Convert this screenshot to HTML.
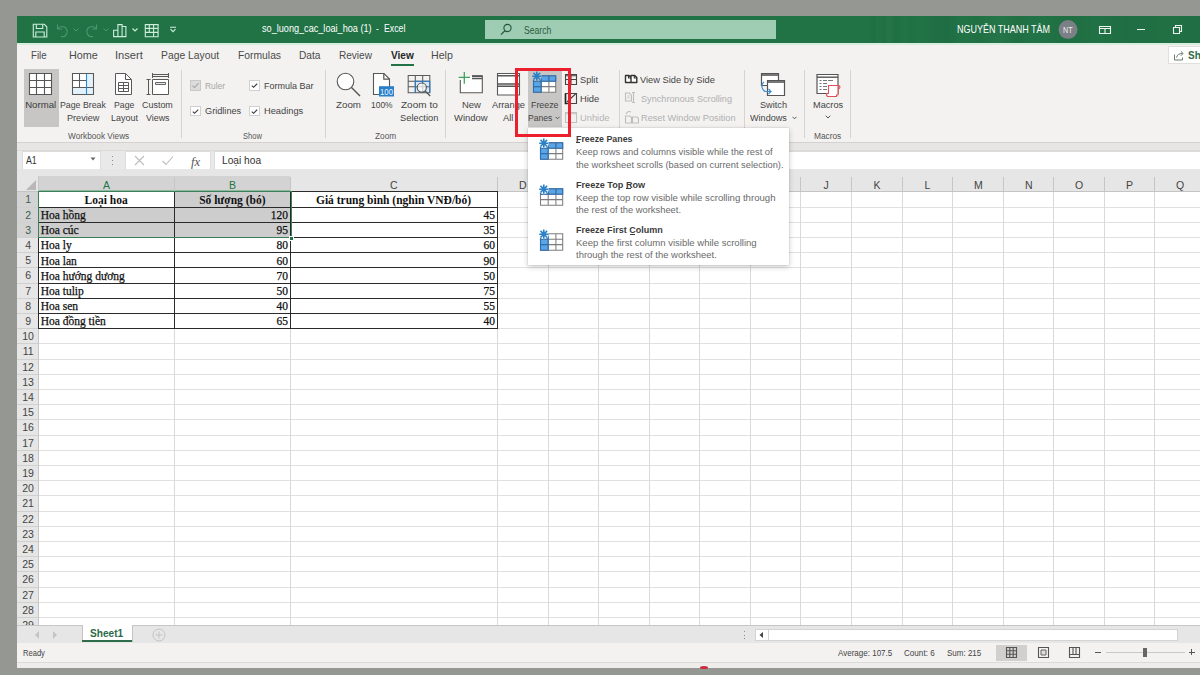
<!DOCTYPE html>
<html><head><meta charset="utf-8"><style>
html,body{margin:0;padding:0;width:1200px;height:675px;overflow:hidden;background:#959793;position:relative;font-family:'Liberation Sans', sans-serif}
</style></head><body>
<div style="position:absolute;left:17px;top:16px;width:1183px;height:651px;background:#f3f2f1;"></div><div style="position:absolute;left:17px;top:16px;width:1183px;height:26.5px;background:#217346;"></div><div style="position:absolute;left:17px;top:42.5px;width:1183px;height:2px;background:#d6eedd;"></div><div style="position:absolute;left:868px;top:16px;width:332px;height:26.5px;background:linear-gradient(90deg,rgba(0,0,0,0.000) 0px,rgba(0,0,0,0.039) 6px,rgba(0,0,0,0.000) 10px,rgba(0,0,0,0.028) 16px,rgba(255,255,255,0.017) 22px,rgba(0,0,0,0.044) 28px,rgba(0,0,0,0.000) 36px,rgba(0,0,0,0.033) 44px,rgba(0,0,0,0.000) 52px,rgba(0,0,0,0.039) 70px,rgba(0,0,0,0.055) 80px,rgba(0,0,0,0.000) 92px,rgba(0,0,0,0.028) 110px,rgba(255,255,255,0.017) 130px,rgba(0,0,0,0.033) 150px,rgba(0,0,0,0.000) 170px,rgba(0,0,0,0.044) 200px,rgba(0,0,0,0.017) 230px,rgba(0,0,0,0.050) 260px,rgba(0,0,0,0.022) 300px,rgba(0,0,0,0.044) 332px);"></div><svg style="position:absolute;left:32px;top:23px;" width="16" height="15" viewBox="0 0 16 15"><path d="M1.3 1.3h11l2.5 2.5v10.2H1.3z" fill="none" stroke="#cdeedb" stroke-width="1.1"/><path d="M4.3 1.3v4.2h6.4V1.3M3.8 14v-5h8.4v5" fill="none" stroke="#cdeedb" stroke-width="1.1"/></svg><svg style="position:absolute;left:55px;top:23px;" width="14" height="15" viewBox="0 0 14 15"><path d="M2.5 1.5v4.5h4.5M2.8 6A5 5 0 1 1 6 13.5" fill="none" stroke="#4d9470" stroke-width="1.1"/></svg><svg style="position:absolute;left:73px;top:28px;" width="6" height="4" viewBox="0 0 6 4"><path d="M.5 .5l2.5 2.5 2.5-2.5" fill="none" stroke="#4d9470" stroke-width="1"/></svg><svg style="position:absolute;left:85px;top:23px;" width="14" height="15" viewBox="0 0 14 15"><path d="M11.5 1.5v4.5H7M11.2 6A5 5 0 1 0 8 13.5" fill="none" stroke="#4d9470" stroke-width="1.1"/></svg><svg style="position:absolute;left:103px;top:28px;" width="6" height="4" viewBox="0 0 6 4"><path d="M.5 .5l2.5 2.5 2.5-2.5" fill="none" stroke="#4d9470" stroke-width="1"/></svg><svg style="position:absolute;left:112px;top:23px;" width="15" height="15" viewBox="0 0 15 15"><path d="M1.6 13.6V7.3h4.3v6.3zM5.9 13.6V1.6h4.2v12zM10.1 13.6V3.5h3.8v10.1z" fill="none" stroke="#cdeedb" stroke-width="1.1"/></svg><svg style="position:absolute;left:131.5px;top:27.5px;" width="6" height="4" viewBox="0 0 6 4"><path d="M.5 .5l2.5 2.5 2.5-2.5" fill="none" stroke="#cdeedb" stroke-width="1.1"/></svg><svg style="position:absolute;left:144px;top:23px;" width="15" height="15" viewBox="0 0 15 15"><path d="M1.3 1.6h12.8v12.2H1.3zM1.3 5.4h12.8M1.3 9.4h12.8M5.3 1.6v7.8M9.6 1.6v12.2" fill="none" stroke="#cdeedb" stroke-width="1.1"/></svg><svg style="position:absolute;left:169px;top:26px;" width="8" height="7" viewBox="0 0 8 7"><path d="M1 1.2h6M1.5 3.2l2.5 2.5 2.5-2.5" fill="none" stroke="#cdeedb" stroke-width="1.1"/></svg><span id="t0" style="position:absolute;left:261.70px;top:22.08px;font-family:'Liberation Sans', sans-serif;font-size:11px;font-weight:400;color:#ffffff;line-height:normal;white-space:pre;transform:scaleX(0.8293);transform-origin:0 0;">so_luong_cac_loai_hoa (1)</span><span id="t1" style="position:absolute;left:376.00px;top:22.08px;font-family:'Liberation Sans', sans-serif;font-size:11px;font-weight:400;color:#ffffff;line-height:normal;white-space:pre;transform:scaleX(0.7500);transform-origin:0 0;">-</span><span id="t2" style="position:absolute;left:384.20px;top:22.08px;font-family:'Liberation Sans', sans-serif;font-size:11px;font-weight:400;color:#ffffff;line-height:normal;white-space:pre;transform:scaleX(0.7938);transform-origin:0 0;">Excel</span><div style="position:absolute;left:485px;top:20px;width:291px;height:19px;background:#9fcdb3;"></div><svg style="position:absolute;left:499px;top:23px;" width="14" height="13" viewBox="0 0 14 13"><circle cx="8.5" cy="5" r="3.6" fill="none" stroke="#1f5236" stroke-width="1.1"/><path d="M6 7.6L2 11.6" stroke="#1f5236" stroke-width="1.2"/></svg><span id="t3" style="position:absolute;left:524.00px;top:23.54px;font-family:'Liberation Sans', sans-serif;font-size:10.5px;font-weight:400;color:#2b5b3f;line-height:normal;white-space:pre;transform:scaleX(0.8226);transform-origin:0 0;">Search</span><span id="t4" style="position:absolute;left:957.30px;top:23.34px;font-family:'Liberation Sans', sans-serif;font-size:10.5px;font-weight:400;color:#ffffff;line-height:normal;white-space:pre;transform:scaleX(0.8556);transform-origin:0 0;">NGUYỄN THANH TÂM</span><svg style="position:absolute;left:1058px;top:20px;" width="20" height="20" viewBox="0 0 20 20"><circle cx="10" cy="9.6" r="9.5" fill="#7b7f86"/></svg><span id="t5" style="position:absolute;left:1063.00px;top:24.52px;font-family:'Liberation Sans', sans-serif;font-size:9px;font-weight:400;color:#eeeeee;line-height:normal;white-space:pre;transform:scaleX(0.8000);transform-origin:0 0;">NT</span><svg style="position:absolute;left:1098px;top:25px;" width="14" height="10" viewBox="0 0 14 10"><path d="M1.5 1.5h11v7h-11zM1.5 3.5h11M7 3.5v5" fill="none" stroke="#eef5f0" stroke-width="1.1"/></svg><div style="position:absolute;left:1136.5px;top:28.8px;width:8px;height:1.1px;background:#eef5f0;"></div><svg style="position:absolute;left:1172px;top:24px;" width="11" height="11" viewBox="0 0 11 11"><path d="M1.5 3.5h6v6h-6zM3.5 3.5v-2h6v6h-2" fill="none" stroke="#eef5f0" stroke-width="1.1"/></svg><span id="t6" style="position:absolute;left:30.75px;top:48.88px;font-family:'Liberation Sans', sans-serif;font-size:11px;font-weight:400;color:#4a4a4a;line-height:normal;white-space:pre;transform:scaleX(0.8803);transform-origin:0 0;">File</span><span id="t7" style="position:absolute;left:69.00px;top:48.88px;font-family:'Liberation Sans', sans-serif;font-size:11px;font-weight:400;color:#4a4a4a;line-height:normal;white-space:pre;transform:scaleX(0.9838);transform-origin:0 0;">Home</span><span id="t8" style="position:absolute;left:114.99px;top:48.88px;font-family:'Liberation Sans', sans-serif;font-size:11px;font-weight:400;color:#4a4a4a;line-height:normal;white-space:pre;transform:scaleX(1.0112);transform-origin:0 0;">Insert</span><span id="t9" style="position:absolute;left:161.00px;top:48.88px;font-family:'Liberation Sans', sans-serif;font-size:11px;font-weight:400;color:#4a4a4a;line-height:normal;white-space:pre;transform:scaleX(0.9398);transform-origin:0 0;">Page Layout</span><span id="t10" style="position:absolute;left:237.50px;top:48.88px;font-family:'Liberation Sans', sans-serif;font-size:11px;font-weight:400;color:#4a4a4a;line-height:normal;white-space:pre;transform:scaleX(0.9387);transform-origin:0 0;">Formulas</span><span id="t11" style="position:absolute;left:298.75px;top:48.88px;font-family:'Liberation Sans', sans-serif;font-size:11px;font-weight:400;color:#4a4a4a;line-height:normal;white-space:pre;transform:scaleX(0.9226);transform-origin:0 0;">Data</span><span id="t12" style="position:absolute;left:339.00px;top:48.88px;font-family:'Liberation Sans', sans-serif;font-size:11px;font-weight:400;color:#4a4a4a;line-height:normal;white-space:pre;transform:scaleX(0.9135);transform-origin:0 0;">Review</span><span id="t13" style="position:absolute;left:390.50px;top:48.88px;font-family:'Liberation Sans', sans-serif;font-size:11px;font-weight:700;color:#262626;line-height:normal;white-space:pre;transform:scaleX(0.9185);transform-origin:0 0;">View</span><span id="t14" style="position:absolute;left:430.75px;top:48.88px;font-family:'Liberation Sans', sans-serif;font-size:11px;font-weight:400;color:#4a4a4a;line-height:normal;white-space:pre;transform:scaleX(0.9664);transform-origin:0 0;">Help</span><div style="position:absolute;left:391px;top:64px;width:23px;height:2.2px;background:#217346;"></div><div style="position:absolute;left:1168.4px;top:45.8px;width:40px;height:18.4px;box-sizing:border-box;border:1px solid #e1dfdd;background:#ffffff;"></div><svg style="position:absolute;left:1173px;top:50px;" width="12" height="11" viewBox="0 0 12 11"><path d="M1.5 4.5v5.5h8V7.5M3.5 7.5c.5-3 3-4 6-4M7.8 1.3l2.3 2.2-2.3 2.3" fill="none" stroke="#6b7a70" stroke-width="1"/></svg><span id="t15" style="position:absolute;left:1187.50px;top:48.78px;font-family:'Liberation Sans', sans-serif;font-size:11px;font-weight:700;color:#2e6b47;line-height:normal;white-space:pre;transform:scaleX(0.9068);transform-origin:0 0;">Sh</span><div style="position:absolute;left:181px;top:70px;width:1px;height:68px;background:#d6d4d2;"></div><div style="position:absolute;left:325px;top:70px;width:1px;height:68px;background:#d6d4d2;"></div><div style="position:absolute;left:445px;top:70px;width:1px;height:68px;background:#d6d4d2;"></div><div style="position:absolute;left:619px;top:70px;width:1px;height:68px;background:#d6d4d2;"></div><div style="position:absolute;left:744px;top:70px;width:1px;height:68px;background:#d6d4d2;"></div><div style="position:absolute;left:804px;top:70px;width:1px;height:68px;background:#d6d4d2;"></div><div style="position:absolute;left:850px;top:70px;width:1px;height:68px;background:#d6d4d2;"></div><div style="position:absolute;left:24px;top:69px;width:34.5px;height:58px;background:#c8c6c4;"></div><svg style="position:absolute;left:28px;top:72px;" width="25" height="25" viewBox="0 0 25 25"><path d="M1.5 1.5h22v21h-22z" fill="#fff" stroke="#555" stroke-width="1.1"/><path d="M8.5 1.5v21M16.5 1.5v21M1.5 8.5h22M1.5 15.5h22" stroke="#555" stroke-width="1.1"/></svg><span id="t16" style="position:absolute;left:25.20px;top:99.27px;font-family:'Liberation Sans', sans-serif;font-size:9.6px;font-weight:400;color:#3a3a3a;line-height:normal;white-space:pre;">Normal</span><svg style="position:absolute;left:71px;top:72px;" width="25" height="25" viewBox="0 0 25 25"><path d="M1.5 1.5h21v21h-21z" fill="#fff"/><path d="M15.5 1.5h7v21h-21v-7h14z" fill="#e3f1fb"/><path d="M1.5 1.5h21v21h-21z" fill="none" stroke="#585858" stroke-width="1.05"/><path d="M8.5 1.5v14M1.5 8.5h14M1.5 15.5h21" stroke="#585858" stroke-width="1.05"/><path d="M15.5 1.5v21" stroke="#2a8ad4" stroke-width="1.1"/></svg><span id="t17" style="position:absolute;left:60.00px;top:99.27px;font-family:'Liberation Sans', sans-serif;font-size:9.6px;font-weight:400;color:#444;line-height:normal;white-space:pre;transform:scaleX(0.9139);transform-origin:0 0;">Page Break</span><span id="t18" style="position:absolute;left:66.60px;top:111.97px;font-family:'Liberation Sans', sans-serif;font-size:9.6px;font-weight:400;color:#444;line-height:normal;white-space:pre;transform:scaleX(0.9476);transform-origin:0 0;">Preview</span><svg style="position:absolute;left:114px;top:72px;" width="20" height="25" viewBox="0 0 20 25"><path d="M1.5 1.5h10l6 6v15H1.5z" fill="#fff" stroke="#585858" stroke-width="1"/><path d="M11.5 1.5v6h6" fill="none" stroke="#585858" stroke-width="1"/><path d="M4.5 10.5h10v9h-10zM9.5 10.5v9M4.5 13.5h10M4.5 16.5h10" fill="none" stroke="#585858" stroke-width="1"/></svg><span id="t19" style="position:absolute;left:114.00px;top:99.27px;font-family:'Liberation Sans', sans-serif;font-size:9.6px;font-weight:400;color:#444;line-height:normal;white-space:pre;transform:scaleX(0.9062);transform-origin:0 0;">Page</span><span id="t20" style="position:absolute;left:110.50px;top:111.97px;font-family:'Liberation Sans', sans-serif;font-size:9.6px;font-weight:400;color:#444;line-height:normal;white-space:pre;transform:scaleX(0.9334);transform-origin:0 0;">Layout</span><svg style="position:absolute;left:145px;top:72px;" width="26" height="25" viewBox="0 0 26 25"><path d="M3.5 7.5v15M1.5 7.5h4M1.5 22.5h4" fill="none" stroke="#585858" stroke-width="1"/><path d="M7.5 2.5h16M7.5 4.5h16M7.5 1v5M23.5 1v5" fill="none" stroke="#585858" stroke-width="1"/><path d="M7.5 7.5h16v15h-16z" fill="#fff" stroke="#585858" stroke-width="1"/><path d="M10.5 10.5h10v2h-10z" fill="#e6e6e6" stroke="#666" stroke-width="1"/></svg><span id="t21" style="position:absolute;left:142.00px;top:99.27px;font-family:'Liberation Sans', sans-serif;font-size:9.6px;font-weight:400;color:#444;line-height:normal;white-space:pre;transform:scaleX(0.9316);transform-origin:0 0;">Custom</span><span id="t22" style="position:absolute;left:146.00px;top:111.97px;font-family:'Liberation Sans', sans-serif;font-size:9.6px;font-weight:400;color:#444;line-height:normal;white-space:pre;transform:scaleX(0.9250);transform-origin:0 0;">Views</span><span id="t23" style="position:absolute;left:68.00px;top:131.18px;font-family:'Liberation Sans', sans-serif;font-size:8.5px;font-weight:400;color:#555;line-height:normal;white-space:pre;transform:scaleX(0.9723);transform-origin:0 0;">Workbook Views</span><div style="position:absolute;left:190px;top:80px;width:11px;height:11px;box-sizing:border-box;border:1px solid #c8c8c8;background:#dcdcdc;"></div><svg style="position:absolute;left:190px;top:80px;" width="11" height="11" viewBox="0 0 11 11"><path d="M2.5 5.7l2 2 4-4.5" fill="none" stroke="#a8a8a8" stroke-width="1.1"/></svg><span id="t24" style="position:absolute;left:204.80px;top:79.97px;font-family:'Liberation Sans', sans-serif;font-size:9.6px;font-weight:400;color:#a6a6a6;line-height:normal;white-space:pre;transform:scaleX(0.8765);transform-origin:0 0;">Ruler</span><div style="position:absolute;left:249px;top:80px;width:10.5px;height:10.5px;box-sizing:border-box;border:1px solid #d0d0d0;background:#ffffff;"></div><svg style="position:absolute;left:249px;top:80px;" width="11" height="11" viewBox="0 0 11 11"><path d="M2.8 5.6l1.8 1.7 3.6-3.6" fill="none" stroke="#3a3a3a" stroke-width="1.15"/></svg><div style="position:absolute;left:190px;top:105.5px;width:10.5px;height:10.5px;box-sizing:border-box;border:1px solid #d0d0d0;background:#ffffff;"></div><svg style="position:absolute;left:190px;top:105.5px;" width="11" height="11" viewBox="0 0 11 11"><path d="M2.8 5.6l1.8 1.7 3.6-3.6" fill="none" stroke="#3a3a3a" stroke-width="1.15"/></svg><div style="position:absolute;left:249px;top:105.5px;width:10.5px;height:10.5px;box-sizing:border-box;border:1px solid #d0d0d0;background:#ffffff;"></div><svg style="position:absolute;left:249px;top:105.5px;" width="11" height="11" viewBox="0 0 11 11"><path d="M2.8 5.6l1.8 1.7 3.6-3.6" fill="none" stroke="#3a3a3a" stroke-width="1.15"/></svg><span id="t25" style="position:absolute;left:263.60px;top:79.97px;font-family:'Liberation Sans', sans-serif;font-size:9.6px;font-weight:400;color:#444;line-height:normal;white-space:pre;transform:scaleX(0.9368);transform-origin:0 0;">Formula Bar</span><span id="t26" style="position:absolute;left:204.80px;top:105.47px;font-family:'Liberation Sans', sans-serif;font-size:9.6px;font-weight:400;color:#444;line-height:normal;white-space:pre;transform:scaleX(0.9564);transform-origin:0 0;">Gridlines</span><span id="t27" style="position:absolute;left:263.60px;top:105.47px;font-family:'Liberation Sans', sans-serif;font-size:9.6px;font-weight:400;color:#444;line-height:normal;white-space:pre;transform:scaleX(0.9672);transform-origin:0 0;">Headings</span><span id="t28" style="position:absolute;left:243.00px;top:130.98px;font-family:'Liberation Sans', sans-serif;font-size:8.5px;font-weight:400;color:#555;line-height:normal;white-space:pre;transform:scaleX(0.8859);transform-origin:0 0;">Show</span><svg style="position:absolute;left:335px;top:72px;" width="27" height="25" viewBox="0 0 27 25"><circle cx="10.5" cy="9.5" r="8.3" fill="#fff" stroke="#585858" stroke-width="1.1"/><path d="M16.5 15.5l8.5 8.5" stroke="#555" stroke-width="1.4"/></svg><span id="t29" style="position:absolute;left:336.00px;top:99.27px;font-family:'Liberation Sans', sans-serif;font-size:9.6px;font-weight:400;color:#444;line-height:normal;white-space:pre;transform:scaleX(1.0191);transform-origin:0 0;">Zoom</span><svg style="position:absolute;left:372px;top:72px;" width="24" height="26" viewBox="0 0 24 26"><path d="M1.5 1.5h10.5l5.5 5.5v15.5H1.5z" fill="#fff" stroke="#585858" stroke-width="1.1"/><path d="M11.8 1.5V7.2h5.7" fill="none" stroke="#555" stroke-width="1.2"/><rect x="7" y="14.2" width="15" height="10.3" fill="#2a7fc9"/><text x="14.5" y="22.6" font-family="Liberation Sans, sans-serif" font-size="8.8" fill="#e8f4ff" text-anchor="middle" textLength="13" lengthAdjust="spacingAndGlyphs">100</text></svg><span id="t30" style="position:absolute;left:371.00px;top:99.27px;font-family:'Liberation Sans', sans-serif;font-size:9.6px;font-weight:400;color:#444;line-height:normal;white-space:pre;transform:scaleX(0.8798);transform-origin:0 0;">100%</span><svg style="position:absolute;left:406px;top:73px;" width="27" height="26" viewBox="0 0 27 26"><path d="M9.3 8.3h14.5v11.4H9.3z" fill="#d5e9f8"/><path d="M2.2 2.4h21.6v17.3H2.2zM2.2 8.3h21.6M2.2 13.7h21.6M9.3 2.4v17.3M16.7 2.4v17.3" fill="none" stroke="#5a5a5a" stroke-width="1.05"/><path d="M9.3 19.7V8.3h14.5v11.4" fill="none" stroke="#2e7cc4" stroke-width="1.1"/><circle cx="15.8" cy="14.6" r="4.6" fill="#fff" fill-opacity="0.7" stroke="#555" stroke-width="1.15"/><path d="M19.2 18l5 5" stroke="#555" stroke-width="1.3"/></svg><span id="t31" style="position:absolute;left:400.60px;top:99.27px;font-family:'Liberation Sans', sans-serif;font-size:9.6px;font-weight:400;color:#444;line-height:normal;white-space:pre;transform:scaleX(1.0444);transform-origin:0 0;">Zoom to</span><span id="t32" style="position:absolute;left:399.60px;top:111.97px;font-family:'Liberation Sans', sans-serif;font-size:9.6px;font-weight:400;color:#444;line-height:normal;white-space:pre;transform:scaleX(0.9711);transform-origin:0 0;">Selection</span><span id="t33" style="position:absolute;left:374.80px;top:130.78px;font-family:'Liberation Sans', sans-serif;font-size:8.5px;font-weight:400;color:#555;line-height:normal;white-space:pre;transform:scaleX(0.9794);transform-origin:0 0;">Zoom</span><svg style="position:absolute;left:457px;top:71px;" width="28" height="24" viewBox="0 0 28 24"><path d="M3.3 9v12.7h22v-17H15" fill="#fff" stroke="#585858" stroke-width="1.1"/><path d="M15 5.3h10.3M15 7.5h10.3" stroke="#555" stroke-width="1.6"/><path d="M1.7 6.3h11.3M7.3 1v11.7" stroke="#3ea35f" stroke-width="1.3"/></svg><span id="t34" style="position:absolute;left:462.00px;top:99.37px;font-family:'Liberation Sans', sans-serif;font-size:9.6px;font-weight:400;color:#444;line-height:normal;white-space:pre;transform:scaleX(0.9863);transform-origin:0 0;">New</span><span id="t35" style="position:absolute;left:454.00px;top:111.87px;font-family:'Liberation Sans', sans-serif;font-size:9.6px;font-weight:400;color:#444;line-height:normal;white-space:pre;transform:scaleX(0.9856);transform-origin:0 0;">Window</span><svg style="position:absolute;left:496px;top:72px;" width="25" height="25" viewBox="0 0 25 25"><path d="M1.5 1.5h22v21.5h-22z" fill="#fff" stroke="#585858" stroke-width="1.1"/><path d="M1.5 3.7h22M1.5 12h22M1.5 14.2h22" stroke="#555" stroke-width="1.4"/></svg><span id="t36" style="position:absolute;left:491.80px;top:99.37px;font-family:'Liberation Sans', sans-serif;font-size:9.6px;font-weight:400;color:#444;line-height:normal;white-space:pre;transform:scaleX(0.9676);transform-origin:0 0;">Arrange</span><span id="t37" style="position:absolute;left:502.70px;top:111.87px;font-family:'Liberation Sans', sans-serif;font-size:9.6px;font-weight:400;color:#444;line-height:normal;white-space:pre;transform:scaleX(0.9781);transform-origin:0 0;">All</span><div style="position:absolute;left:527.7px;top:71px;width:34.6px;height:56px;background:#c8c6c4;"></div><svg style="position:absolute;left:531.7px;top:70.5px;" width="25" height="23" viewBox="0 0 25 23"><rect x="1.5" y="4.8" width="7.699999999999999" height="5.500000000000001" fill="#58a6ea"/><rect x="9.2" y="4.8" width="7.699999999999999" height="5.500000000000001" fill="#58a6ea"/><rect x="16.9" y="4.8" width="6.800000000000001" height="5.500000000000001" fill="#58a6ea"/><rect x="1.5" y="10.3" width="7.699999999999999" height="5.299999999999999" fill="#58a6ea"/><rect x="9.2" y="10.3" width="7.699999999999999" height="5.299999999999999" fill="#fff"/><rect x="16.9" y="10.3" width="6.800000000000001" height="5.299999999999999" fill="#fff"/><rect x="1.5" y="15.6" width="7.699999999999999" height="5.700000000000001" fill="#58a6ea"/><rect x="9.2" y="15.6" width="7.699999999999999" height="5.700000000000001" fill="#fff"/><rect x="16.9" y="15.6" width="6.800000000000001" height="5.700000000000001" fill="#fff"/><path d="M1.5 4.8h22.2v16.5H1.5zM1.5 10.3h22.2M1.5 15.6h22.2M9.2 4.8v16.5M16.9 4.8v16.5" fill="none" stroke="#7d7d7d" stroke-width="1.05"/><path d="M1.5 21.3V4.8h22.2v5.5H9.2v11H1.5zM1.5 15.6h7.7M9.2 4.8v5.5M16.9 4.8v5.5M1.5 10.3h7.7" fill="none" stroke="#2d6fb3" stroke-width="1.1"/><circle cx="4.8" cy="5.2" r="5" fill="#c8c6c4" opacity="0.9"/><path d="M4.8 .6v9.2M.2 5.2h9.2M1.5 1.9l6.6 6.6M8.1 1.9l-6.6 6.6" stroke="#2b80c6" stroke-width="1.6"/><circle cx="4.8" cy="5.2" r="1.5" fill="#2b80c6"/></svg><span id="t38" style="position:absolute;left:530.50px;top:99.37px;font-family:'Liberation Sans', sans-serif;font-size:9.6px;font-weight:400;color:#444;line-height:normal;white-space:pre;transform:scaleX(0.9213);transform-origin:0 0;">Freeze</span><span id="t39" style="position:absolute;left:528.00px;top:111.87px;font-family:'Liberation Sans', sans-serif;font-size:9.6px;font-weight:400;color:#444;line-height:normal;white-space:pre;transform:scaleX(0.8940);transform-origin:0 0;">Panes</span><svg style="position:absolute;left:555px;top:115.5px;" width="5" height="4" viewBox="0 0 5 4"><path d="M.5 .8l2 2 2-2" fill="none" stroke="#555" stroke-width="1"/></svg><svg style="position:absolute;left:564px;top:73px;" width="14" height="13" viewBox="0 0 14 13"><path d="M1.5 1.5h11v10h-11zM1.5 6.5h11M7 1.5v10M1.5 2.8h11" fill="none" stroke="#444" stroke-width="1.1"/></svg><span id="t40" style="position:absolute;left:580.40px;top:73.77px;font-family:'Liberation Sans', sans-serif;font-size:9.6px;font-weight:400;color:#444;line-height:normal;white-space:pre;transform:scaleX(0.9633);transform-origin:0 0;">Split</span><svg style="position:absolute;left:564px;top:92px;" width="14" height="13" viewBox="0 0 14 13"><path d="M1.5 1.5h11v10h-11z" fill="none" stroke="#444" stroke-width="1.1"/><path d="M3 10l9-8.5" stroke="#444" stroke-width="1.1"/><path d="M1.5 1.5v10h2" stroke="#222" stroke-width="1.6" fill="none"/></svg><span id="t41" style="position:absolute;left:580.40px;top:92.87px;font-family:'Liberation Sans', sans-serif;font-size:9.6px;font-weight:400;color:#444;line-height:normal;white-space:pre;transform:scaleX(0.9796);transform-origin:0 0;">Hide</span><svg style="position:absolute;left:564px;top:111px;" width="14" height="13" viewBox="0 0 14 13"><path d="M1.5 1.5h11v10h-11zM1.5 2.8h11" fill="none" stroke="#c0c0c0" stroke-width="1.1"/></svg><span id="t42" style="position:absolute;left:580.40px;top:111.77px;font-family:'Liberation Sans', sans-serif;font-size:9.6px;font-weight:400;color:#b4b4b4;line-height:normal;white-space:pre;transform:scaleX(0.9712);transform-origin:0 0;">Unhide</span><svg style="position:absolute;left:624px;top:74px;" width="15" height="10" viewBox="0 0 15 10"><path d="M1.5 1.5h3.5l2 2v5H1.5zM7 3.5v5h5.8v-5l-2-2H7z" fill="#fff" stroke="#333" stroke-width="1.4" stroke-linejoin="round"/><path d="M4.5 1.5v2.5h2.5M10.3 1.5v2.5h2.5" fill="none" stroke="#333" stroke-width="1.1"/></svg><span id="t43" style="position:absolute;left:640.20px;top:73.77px;font-family:'Liberation Sans', sans-serif;font-size:9.6px;font-weight:400;color:#444;line-height:normal;white-space:pre;transform:scaleX(0.9698);transform-origin:0 0;">View Side by Side</span><svg style="position:absolute;left:624px;top:91px;" width="15" height="13" viewBox="0 0 15 13"><path d="M1.5 2v8h6V4.5L5.5 2zM9.5 2v9M8 1.5h3M8 11.5h3M3.5 5h2M3.5 7h2" fill="none" stroke="#bdbdbd" stroke-width="1.1"/></svg><span id="t44" style="position:absolute;left:640.50px;top:92.67px;font-family:'Liberation Sans', sans-serif;font-size:9.6px;font-weight:400;color:#b0b0b0;line-height:normal;white-space:pre;transform:scaleX(0.9535);transform-origin:0 0;">Synchronous Scrolling</span><svg style="position:absolute;left:624px;top:110px;" width="15" height="14" viewBox="0 0 15 14"><path d="M1.5 6v7h6V7.5L6 6zM8.5 7v6h6V8.5L13 7zM2 4c1-2 3-3 5-2" fill="none" stroke="#bdbdbd" stroke-width="1.1"/></svg><span id="t45" style="position:absolute;left:640.80px;top:111.77px;font-family:'Liberation Sans', sans-serif;font-size:9.6px;font-weight:400;color:#b0b0b0;line-height:normal;white-space:pre;transform:scaleX(0.9582);transform-origin:0 0;">Reset Window Position</span><svg style="position:absolute;left:758px;top:71px;" width="29" height="27" viewBox="0 0 29 27"><path d="M3.5 2.5h17v12h-17z" fill="#fff" stroke="#555" stroke-width="1.2"/><path d="M3.5 4h17" stroke="#555" stroke-width="1.6"/><path d="M9.5 9.5h17v15h-17z" fill="#fff" stroke="#555" stroke-width="1.2"/><path d="M9.5 11h17" stroke="#555" stroke-width="1.6"/><path d="M6 11c-3 2-3 7 1 9.5h6M10.5 18l2.5 2.5-2.5 2.5" fill="none" stroke="#3a8fd6" stroke-width="1.2"/></svg><span id="t46" style="position:absolute;left:759.70px;top:99.37px;font-family:'Liberation Sans', sans-serif;font-size:9.6px;font-weight:400;color:#444;line-height:normal;white-space:pre;transform:scaleX(0.9563);transform-origin:0 0;">Switch</span><span id="t47" style="position:absolute;left:749.60px;top:111.87px;font-family:'Liberation Sans', sans-serif;font-size:9.6px;font-weight:400;color:#444;line-height:normal;white-space:pre;transform:scaleX(0.9458);transform-origin:0 0;">Windows</span><svg style="position:absolute;left:792px;top:115.5px;" width="5" height="4" viewBox="0 0 5 4"><path d="M.5 .8l2 2 2-2" fill="none" stroke="#555" stroke-width="1"/></svg><svg style="position:absolute;left:815px;top:73px;" width="28" height="25" viewBox="0 0 28 25"><path d="M2 1.5h21v19H2z" fill="#fff" stroke="#555" stroke-width="1.2"/><path d="M2 4.2h21" stroke="#555" stroke-width="1.4"/><path d="M4.5 7.5h2M8 7.5h4M13 7.5h5M4.5 10.5h2M8 10.5h4M4.5 13.5h2M8 13.5h4M4.5 16.5h2M8 16.5h4" stroke="#777" stroke-width="1"/><path d="M13.5 12.5h9.5v9.5h-1.5v1.5h-8c-1.2 0-2-1-2-2v-1h2z" fill="#ffffff" stroke="#e0505a" stroke-width="1.1"/><path d="M23 12.5c1.5 0 2 1 2 1.7s-.5 1.3-2 1.3" fill="none" stroke="#e0505a" stroke-width="1.1"/></svg><span id="t48" style="position:absolute;left:813.00px;top:99.47px;font-family:'Liberation Sans', sans-serif;font-size:9.6px;font-weight:400;color:#444;line-height:normal;white-space:pre;transform:scaleX(0.9572);transform-origin:0 0;">Macros</span><svg style="position:absolute;left:825px;top:115.3px;" width="6" height="4" viewBox="0 0 6 4"><path d="M.7 .7l2.3 2.3 2.3-2.3" fill="none" stroke="#555" stroke-width="1"/></svg><span id="t49" style="position:absolute;left:814.00px;top:130.88px;font-family:'Liberation Sans', sans-serif;font-size:8.5px;font-weight:400;color:#555;line-height:normal;white-space:pre;transform:scaleX(0.9777);transform-origin:0 0;">Macros</span><div style="position:absolute;left:17px;top:142px;width:1183px;height:9px;background:#e7e6e5;"></div><div style="position:absolute;left:17px;top:142.3px;width:1183px;height:1.2px;background:#d3d2d1;"></div><div style="position:absolute;left:17px;top:149.8px;width:1183px;height:1px;background:#dadada;"></div><div style="position:absolute;left:17px;top:151px;width:1183px;height:25px;background:#e9e9e9;"></div><div style="position:absolute;left:21.5px;top:150.5px;width:79.5px;height:19px;box-sizing:border-box;border:1px solid #dcdcdc;background:#ffffff;"></div><span id="t50" style="position:absolute;left:25.90px;top:154.04px;font-family:'Liberation Sans', sans-serif;font-size:10.5px;font-weight:400;color:#333;line-height:normal;white-space:pre;transform:scaleX(0.8382);transform-origin:0 0;">A1</span><svg style="position:absolute;left:90px;top:157px;" width="7" height="5" viewBox="0 0 7 5"><path d="M.5 .5h5L3 3.5z" fill="#666"/></svg><div style="position:absolute;left:112px;top:155.5px;width:1.3px;height:1.3px;background:#8a8a8a;"></div><div style="position:absolute;left:112px;top:159.5px;width:1.3px;height:1.3px;background:#8a8a8a;"></div><div style="position:absolute;left:112px;top:163.5px;width:1.3px;height:1.3px;background:#8a8a8a;"></div><div style="position:absolute;left:125px;top:150.5px;width:86px;height:19px;box-sizing:border-box;border:1px solid #dcdcdc;background:#ffffff;"></div><svg style="position:absolute;left:133px;top:154px;" width="13" height="13" viewBox="0 0 13 13"><path d="M2 2l9 9M11 2l-9 9" stroke="#bdbdbd" stroke-width="1.1"/></svg><svg style="position:absolute;left:161px;top:154px;" width="13" height="13" viewBox="0 0 13 13"><path d="M1.5 7l3.5 3.5 7-8" fill="none" stroke="#bdbdbd" stroke-width="1.1"/></svg><span id="t51" style="position:absolute;left:190.80px;top:154.58px;font-family:'Liberation Serif', serif;font-size:12px;font-weight:400;color:#555;line-height:normal;white-space:pre;transform:scaleX(1.0504);transform-origin:0 0;font-style:italic;">fx</span><div style="position:absolute;left:213.7px;top:150.5px;width:988.3px;height:19px;box-sizing:border-box;border:1px solid #dcdcdc;background:#ffffff;"></div><span id="t52" style="position:absolute;left:222.30px;top:154.04px;font-family:'Liberation Sans', sans-serif;font-size:10.5px;font-weight:400;color:#333;line-height:normal;white-space:pre;transform:scaleX(0.9691);transform-origin:0 0;">Loại hoa</span><div style="position:absolute;left:17px;top:169px;width:1183px;height:22px;background:#e6e6e6;"></div><div style="position:absolute;left:17px;top:191px;width:21px;height:434px;background:#e6e6e6;"></div><div style="position:absolute;left:38px;top:191px;width:1162px;height:434px;background:#ffffff;"></div><div style="position:absolute;left:38px;top:176px;width:252px;height:15px;background:#d3d3d3;"></div><div style="position:absolute;left:38px;top:190px;width:252px;height:1.2px;background:#8fb8a0;"></div><div style="position:absolute;left:17px;top:192px;width:21px;height:45px;background:#d3d3d3;"></div><div style="position:absolute;left:38px;top:207px;width:1162px;height:1px;background:#e0e0e0;"></div><div style="position:absolute;left:17px;top:207px;width:21px;height:1px;background:#d0d0d0;"></div><div style="position:absolute;left:38px;top:222px;width:1162px;height:1px;background:#e0e0e0;"></div><div style="position:absolute;left:17px;top:222px;width:21px;height:1px;background:#d0d0d0;"></div><div style="position:absolute;left:38px;top:237px;width:1162px;height:1px;background:#e0e0e0;"></div><div style="position:absolute;left:17px;top:237px;width:21px;height:1px;background:#d0d0d0;"></div><div style="position:absolute;left:38px;top:252px;width:1162px;height:1px;background:#e0e0e0;"></div><div style="position:absolute;left:17px;top:252px;width:21px;height:1px;background:#d0d0d0;"></div><div style="position:absolute;left:38px;top:267px;width:1162px;height:1px;background:#e0e0e0;"></div><div style="position:absolute;left:17px;top:267px;width:21px;height:1px;background:#d0d0d0;"></div><div style="position:absolute;left:38px;top:283px;width:1162px;height:1px;background:#e0e0e0;"></div><div style="position:absolute;left:17px;top:283px;width:21px;height:1px;background:#d0d0d0;"></div><div style="position:absolute;left:38px;top:298px;width:1162px;height:1px;background:#e0e0e0;"></div><div style="position:absolute;left:17px;top:298px;width:21px;height:1px;background:#d0d0d0;"></div><div style="position:absolute;left:38px;top:313px;width:1162px;height:1px;background:#e0e0e0;"></div><div style="position:absolute;left:17px;top:313px;width:21px;height:1px;background:#d0d0d0;"></div><div style="position:absolute;left:38px;top:328px;width:1162px;height:1px;background:#e0e0e0;"></div><div style="position:absolute;left:17px;top:328px;width:21px;height:1px;background:#d0d0d0;"></div><div style="position:absolute;left:38px;top:343px;width:1162px;height:1px;background:#e0e0e0;"></div><div style="position:absolute;left:17px;top:343px;width:21px;height:1px;background:#d0d0d0;"></div><div style="position:absolute;left:38px;top:359px;width:1162px;height:1px;background:#e0e0e0;"></div><div style="position:absolute;left:17px;top:359px;width:21px;height:1px;background:#d0d0d0;"></div><div style="position:absolute;left:38px;top:374px;width:1162px;height:1px;background:#e0e0e0;"></div><div style="position:absolute;left:17px;top:374px;width:21px;height:1px;background:#d0d0d0;"></div><div style="position:absolute;left:38px;top:389px;width:1162px;height:1px;background:#e0e0e0;"></div><div style="position:absolute;left:17px;top:389px;width:21px;height:1px;background:#d0d0d0;"></div><div style="position:absolute;left:38px;top:404px;width:1162px;height:1px;background:#e0e0e0;"></div><div style="position:absolute;left:17px;top:404px;width:21px;height:1px;background:#d0d0d0;"></div><div style="position:absolute;left:38px;top:419px;width:1162px;height:1px;background:#e0e0e0;"></div><div style="position:absolute;left:17px;top:419px;width:21px;height:1px;background:#d0d0d0;"></div><div style="position:absolute;left:38px;top:435px;width:1162px;height:1px;background:#e0e0e0;"></div><div style="position:absolute;left:17px;top:435px;width:21px;height:1px;background:#d0d0d0;"></div><div style="position:absolute;left:38px;top:450px;width:1162px;height:1px;background:#e0e0e0;"></div><div style="position:absolute;left:17px;top:450px;width:21px;height:1px;background:#d0d0d0;"></div><div style="position:absolute;left:38px;top:465px;width:1162px;height:1px;background:#e0e0e0;"></div><div style="position:absolute;left:17px;top:465px;width:21px;height:1px;background:#d0d0d0;"></div><div style="position:absolute;left:38px;top:480px;width:1162px;height:1px;background:#e0e0e0;"></div><div style="position:absolute;left:17px;top:480px;width:21px;height:1px;background:#d0d0d0;"></div><div style="position:absolute;left:38px;top:495px;width:1162px;height:1px;background:#e0e0e0;"></div><div style="position:absolute;left:17px;top:495px;width:21px;height:1px;background:#d0d0d0;"></div><div style="position:absolute;left:38px;top:511px;width:1162px;height:1px;background:#e0e0e0;"></div><div style="position:absolute;left:17px;top:511px;width:21px;height:1px;background:#d0d0d0;"></div><div style="position:absolute;left:38px;top:526px;width:1162px;height:1px;background:#e0e0e0;"></div><div style="position:absolute;left:17px;top:526px;width:21px;height:1px;background:#d0d0d0;"></div><div style="position:absolute;left:38px;top:541px;width:1162px;height:1px;background:#e0e0e0;"></div><div style="position:absolute;left:17px;top:541px;width:21px;height:1px;background:#d0d0d0;"></div><div style="position:absolute;left:38px;top:556px;width:1162px;height:1px;background:#e0e0e0;"></div><div style="position:absolute;left:17px;top:556px;width:21px;height:1px;background:#d0d0d0;"></div><div style="position:absolute;left:38px;top:571px;width:1162px;height:1px;background:#e0e0e0;"></div><div style="position:absolute;left:17px;top:571px;width:21px;height:1px;background:#d0d0d0;"></div><div style="position:absolute;left:38px;top:587px;width:1162px;height:1px;background:#e0e0e0;"></div><div style="position:absolute;left:17px;top:587px;width:21px;height:1px;background:#d0d0d0;"></div><div style="position:absolute;left:38px;top:602px;width:1162px;height:1px;background:#e0e0e0;"></div><div style="position:absolute;left:17px;top:602px;width:21px;height:1px;background:#d0d0d0;"></div><div style="position:absolute;left:38px;top:617px;width:1162px;height:1px;background:#e0e0e0;"></div><div style="position:absolute;left:17px;top:617px;width:21px;height:1px;background:#d0d0d0;"></div><div style="position:absolute;left:174px;top:192px;width:1px;height:433px;background:#d9d9d9;"></div><div style="position:absolute;left:174px;top:177px;width:1px;height:14px;background:#c6c6c6;"></div><div style="position:absolute;left:290px;top:192px;width:1px;height:433px;background:#d9d9d9;"></div><div style="position:absolute;left:290px;top:177px;width:1px;height:14px;background:#c6c6c6;"></div><div style="position:absolute;left:497px;top:192px;width:1px;height:433px;background:#d9d9d9;"></div><div style="position:absolute;left:497px;top:177px;width:1px;height:14px;background:#c6c6c6;"></div><div style="position:absolute;left:548px;top:192px;width:1px;height:433px;background:#d9d9d9;"></div><div style="position:absolute;left:548px;top:177px;width:1px;height:14px;background:#c6c6c6;"></div><div style="position:absolute;left:598px;top:192px;width:1px;height:433px;background:#d9d9d9;"></div><div style="position:absolute;left:598px;top:177px;width:1px;height:14px;background:#c6c6c6;"></div><div style="position:absolute;left:649px;top:192px;width:1px;height:433px;background:#d9d9d9;"></div><div style="position:absolute;left:649px;top:177px;width:1px;height:14px;background:#c6c6c6;"></div><div style="position:absolute;left:699px;top:192px;width:1px;height:433px;background:#d9d9d9;"></div><div style="position:absolute;left:699px;top:177px;width:1px;height:14px;background:#c6c6c6;"></div><div style="position:absolute;left:750px;top:192px;width:1px;height:433px;background:#d9d9d9;"></div><div style="position:absolute;left:750px;top:177px;width:1px;height:14px;background:#c6c6c6;"></div><div style="position:absolute;left:800px;top:192px;width:1px;height:433px;background:#d9d9d9;"></div><div style="position:absolute;left:800px;top:177px;width:1px;height:14px;background:#c6c6c6;"></div><div style="position:absolute;left:851px;top:192px;width:1px;height:433px;background:#d9d9d9;"></div><div style="position:absolute;left:851px;top:177px;width:1px;height:14px;background:#c6c6c6;"></div><div style="position:absolute;left:902px;top:192px;width:1px;height:433px;background:#d9d9d9;"></div><div style="position:absolute;left:902px;top:177px;width:1px;height:14px;background:#c6c6c6;"></div><div style="position:absolute;left:952px;top:192px;width:1px;height:433px;background:#d9d9d9;"></div><div style="position:absolute;left:952px;top:177px;width:1px;height:14px;background:#c6c6c6;"></div><div style="position:absolute;left:1003px;top:192px;width:1px;height:433px;background:#d9d9d9;"></div><div style="position:absolute;left:1003px;top:177px;width:1px;height:14px;background:#c6c6c6;"></div><div style="position:absolute;left:1053px;top:192px;width:1px;height:433px;background:#d9d9d9;"></div><div style="position:absolute;left:1053px;top:177px;width:1px;height:14px;background:#c6c6c6;"></div><div style="position:absolute;left:1104px;top:192px;width:1px;height:433px;background:#d9d9d9;"></div><div style="position:absolute;left:1104px;top:177px;width:1px;height:14px;background:#c6c6c6;"></div><div style="position:absolute;left:1154px;top:192px;width:1px;height:433px;background:#d9d9d9;"></div><div style="position:absolute;left:1154px;top:177px;width:1px;height:14px;background:#c6c6c6;"></div><div style="position:absolute;left:1205px;top:192px;width:1px;height:433px;background:#d9d9d9;"></div><div style="position:absolute;left:1205px;top:177px;width:1px;height:14px;background:#c6c6c6;"></div><div style="position:absolute;left:38px;top:176px;width:1px;height:449px;background:#c6c6c6;"></div><div style="position:absolute;left:17px;top:191px;width:1183px;height:1px;background:#c4c4c4;"></div><div style="position:absolute;left:38px;top:191px;width:252px;height:1px;background:#8fb8a0;"></div><svg style="position:absolute;left:26px;top:180px;" width="10" height="10" viewBox="0 0 10 10"><path d="M10 0v10H0z" fill="#b8b8b8"/></svg><span id="t53" style="position:absolute;left:103.00px;top:179.24px;font-family:'Liberation Sans', sans-serif;font-size:10.5px;font-weight:400;color:#217346;line-height:normal;white-space:pre;">A</span><span id="t54" style="position:absolute;left:229.00px;top:179.24px;font-family:'Liberation Sans', sans-serif;font-size:10.5px;font-weight:400;color:#217346;line-height:normal;white-space:pre;">B</span><span id="t55" style="position:absolute;left:390.00px;top:179.24px;font-family:'Liberation Sans', sans-serif;font-size:10.5px;font-weight:400;color:#444;line-height:normal;white-space:pre;">C</span><span id="t56" style="position:absolute;left:519.00px;top:179.24px;font-family:'Liberation Sans', sans-serif;font-size:10.5px;font-weight:400;color:#444;line-height:normal;white-space:pre;">D</span><span id="t57" style="position:absolute;left:570.00px;top:179.24px;font-family:'Liberation Sans', sans-serif;font-size:10.5px;font-weight:400;color:#444;line-height:normal;white-space:pre;">E</span><span id="t58" style="position:absolute;left:621.00px;top:179.24px;font-family:'Liberation Sans', sans-serif;font-size:10.5px;font-weight:400;color:#444;line-height:normal;white-space:pre;">F</span><span id="t59" style="position:absolute;left:670.50px;top:179.24px;font-family:'Liberation Sans', sans-serif;font-size:10.5px;font-weight:400;color:#444;line-height:normal;white-space:pre;">G</span><span id="t60" style="position:absolute;left:721.50px;top:179.24px;font-family:'Liberation Sans', sans-serif;font-size:10.5px;font-weight:400;color:#444;line-height:normal;white-space:pre;">H</span><span id="t61" style="position:absolute;left:774.50px;top:179.24px;font-family:'Liberation Sans', sans-serif;font-size:10.5px;font-weight:400;color:#444;line-height:normal;white-space:pre;">I</span><span id="t62" style="position:absolute;left:823.50px;top:179.24px;font-family:'Liberation Sans', sans-serif;font-size:10.5px;font-weight:400;color:#444;line-height:normal;white-space:pre;">J</span><span id="t63" style="position:absolute;left:873.50px;top:179.24px;font-family:'Liberation Sans', sans-serif;font-size:10.5px;font-weight:400;color:#444;line-height:normal;white-space:pre;">K</span><span id="t64" style="position:absolute;left:924.50px;top:179.24px;font-family:'Liberation Sans', sans-serif;font-size:10.5px;font-weight:400;color:#444;line-height:normal;white-space:pre;">L</span><span id="t65" style="position:absolute;left:974.00px;top:179.24px;font-family:'Liberation Sans', sans-serif;font-size:10.5px;font-weight:400;color:#444;line-height:normal;white-space:pre;">M</span><span id="t66" style="position:absolute;left:1025.00px;top:179.24px;font-family:'Liberation Sans', sans-serif;font-size:10.5px;font-weight:400;color:#444;line-height:normal;white-space:pre;">N</span><span id="t67" style="position:absolute;left:1075.00px;top:179.24px;font-family:'Liberation Sans', sans-serif;font-size:10.5px;font-weight:400;color:#444;line-height:normal;white-space:pre;">O</span><span id="t68" style="position:absolute;left:1126.00px;top:179.24px;font-family:'Liberation Sans', sans-serif;font-size:10.5px;font-weight:400;color:#444;line-height:normal;white-space:pre;">P</span><span id="t69" style="position:absolute;left:1176.00px;top:179.24px;font-family:'Liberation Sans', sans-serif;font-size:10.5px;font-weight:400;color:#444;line-height:normal;white-space:pre;">Q</span><span id="t70" style="position:absolute;left:25.20px;top:193.24px;font-family:'Liberation Sans', sans-serif;font-size:10.5px;font-weight:400;color:#3d5e4d;line-height:normal;white-space:pre;">1</span><span id="t71" style="position:absolute;left:25.20px;top:209.24px;font-family:'Liberation Sans', sans-serif;font-size:10.5px;font-weight:400;color:#3d5e4d;line-height:normal;white-space:pre;">2</span><span id="t72" style="position:absolute;left:25.20px;top:224.24px;font-family:'Liberation Sans', sans-serif;font-size:10.5px;font-weight:400;color:#3d5e4d;line-height:normal;white-space:pre;">3</span><span id="t73" style="position:absolute;left:25.20px;top:239.24px;font-family:'Liberation Sans', sans-serif;font-size:10.5px;font-weight:400;color:#444;line-height:normal;white-space:pre;">4</span><span id="t74" style="position:absolute;left:25.20px;top:254.24px;font-family:'Liberation Sans', sans-serif;font-size:10.5px;font-weight:400;color:#444;line-height:normal;white-space:pre;">5</span><span id="t75" style="position:absolute;left:25.20px;top:269.24px;font-family:'Liberation Sans', sans-serif;font-size:10.5px;font-weight:400;color:#444;line-height:normal;white-space:pre;">6</span><span id="t76" style="position:absolute;left:25.20px;top:285.24px;font-family:'Liberation Sans', sans-serif;font-size:10.5px;font-weight:400;color:#444;line-height:normal;white-space:pre;">7</span><span id="t77" style="position:absolute;left:25.20px;top:300.24px;font-family:'Liberation Sans', sans-serif;font-size:10.5px;font-weight:400;color:#444;line-height:normal;white-space:pre;">8</span><span id="t78" style="position:absolute;left:25.20px;top:315.24px;font-family:'Liberation Sans', sans-serif;font-size:10.5px;font-weight:400;color:#444;line-height:normal;white-space:pre;">9</span><span id="t79" style="position:absolute;left:22.28px;top:330.24px;font-family:'Liberation Sans', sans-serif;font-size:10.5px;font-weight:400;color:#444;line-height:normal;white-space:pre;">10</span><span id="t80" style="position:absolute;left:22.67px;top:345.24px;font-family:'Liberation Sans', sans-serif;font-size:10.5px;font-weight:400;color:#444;line-height:normal;white-space:pre;">11</span><span id="t81" style="position:absolute;left:22.28px;top:361.24px;font-family:'Liberation Sans', sans-serif;font-size:10.5px;font-weight:400;color:#444;line-height:normal;white-space:pre;">12</span><span id="t82" style="position:absolute;left:22.28px;top:376.24px;font-family:'Liberation Sans', sans-serif;font-size:10.5px;font-weight:400;color:#444;line-height:normal;white-space:pre;">13</span><span id="t83" style="position:absolute;left:22.28px;top:391.24px;font-family:'Liberation Sans', sans-serif;font-size:10.5px;font-weight:400;color:#444;line-height:normal;white-space:pre;">14</span><span id="t84" style="position:absolute;left:22.28px;top:406.24px;font-family:'Liberation Sans', sans-serif;font-size:10.5px;font-weight:400;color:#444;line-height:normal;white-space:pre;">15</span><span id="t85" style="position:absolute;left:22.28px;top:421.24px;font-family:'Liberation Sans', sans-serif;font-size:10.5px;font-weight:400;color:#444;line-height:normal;white-space:pre;">16</span><span id="t86" style="position:absolute;left:22.28px;top:437.24px;font-family:'Liberation Sans', sans-serif;font-size:10.5px;font-weight:400;color:#444;line-height:normal;white-space:pre;">17</span><span id="t87" style="position:absolute;left:22.28px;top:452.24px;font-family:'Liberation Sans', sans-serif;font-size:10.5px;font-weight:400;color:#444;line-height:normal;white-space:pre;">18</span><span id="t88" style="position:absolute;left:22.28px;top:467.24px;font-family:'Liberation Sans', sans-serif;font-size:10.5px;font-weight:400;color:#444;line-height:normal;white-space:pre;">19</span><span id="t89" style="position:absolute;left:22.28px;top:482.24px;font-family:'Liberation Sans', sans-serif;font-size:10.5px;font-weight:400;color:#444;line-height:normal;white-space:pre;">20</span><span id="t90" style="position:absolute;left:22.28px;top:497.24px;font-family:'Liberation Sans', sans-serif;font-size:10.5px;font-weight:400;color:#444;line-height:normal;white-space:pre;">21</span><span id="t91" style="position:absolute;left:22.28px;top:513.24px;font-family:'Liberation Sans', sans-serif;font-size:10.5px;font-weight:400;color:#444;line-height:normal;white-space:pre;">22</span><span id="t92" style="position:absolute;left:22.28px;top:528.24px;font-family:'Liberation Sans', sans-serif;font-size:10.5px;font-weight:400;color:#444;line-height:normal;white-space:pre;">23</span><span id="t93" style="position:absolute;left:22.28px;top:543.24px;font-family:'Liberation Sans', sans-serif;font-size:10.5px;font-weight:400;color:#444;line-height:normal;white-space:pre;">24</span><span id="t94" style="position:absolute;left:22.28px;top:558.24px;font-family:'Liberation Sans', sans-serif;font-size:10.5px;font-weight:400;color:#444;line-height:normal;white-space:pre;">25</span><span id="t95" style="position:absolute;left:22.28px;top:573.24px;font-family:'Liberation Sans', sans-serif;font-size:10.5px;font-weight:400;color:#444;line-height:normal;white-space:pre;">26</span><span id="t96" style="position:absolute;left:22.28px;top:589.24px;font-family:'Liberation Sans', sans-serif;font-size:10.5px;font-weight:400;color:#444;line-height:normal;white-space:pre;">27</span><span id="t97" style="position:absolute;left:22.28px;top:604.24px;font-family:'Liberation Sans', sans-serif;font-size:10.5px;font-weight:400;color:#444;line-height:normal;white-space:pre;">28</span><span id="t98" style="position:absolute;left:22.28px;top:619.24px;font-family:'Liberation Sans', sans-serif;font-size:10.5px;font-weight:400;color:#444;line-height:normal;white-space:pre;">29</span><div style="position:absolute;left:39px;top:208px;width:135px;height:29px;background:#cdcdcd;"></div><div style="position:absolute;left:175px;top:192px;width:115px;height:45px;background:#cdcdcd;"></div><div style="position:absolute;left:38px;top:191px;width:460px;height:1px;background:#2a2a2a;"></div><div style="position:absolute;left:38px;top:207px;width:460px;height:1px;background:#2a2a2a;"></div><div style="position:absolute;left:38px;top:222px;width:460px;height:1px;background:#2a2a2a;"></div><div style="position:absolute;left:38px;top:237px;width:460px;height:1px;background:#2a2a2a;"></div><div style="position:absolute;left:38px;top:252px;width:460px;height:1px;background:#2a2a2a;"></div><div style="position:absolute;left:38px;top:267px;width:460px;height:1px;background:#2a2a2a;"></div><div style="position:absolute;left:38px;top:283px;width:460px;height:1px;background:#2a2a2a;"></div><div style="position:absolute;left:38px;top:298px;width:460px;height:1px;background:#2a2a2a;"></div><div style="position:absolute;left:38px;top:313px;width:460px;height:1px;background:#2a2a2a;"></div><div style="position:absolute;left:38px;top:328px;width:460px;height:1px;background:#2a2a2a;"></div><div style="position:absolute;left:38px;top:191px;width:1px;height:138px;background:#2a2a2a;"></div><div style="position:absolute;left:174px;top:191px;width:1px;height:138px;background:#2a2a2a;"></div><div style="position:absolute;left:290px;top:191px;width:1px;height:138px;background:#2a2a2a;"></div><div style="position:absolute;left:497px;top:191px;width:1px;height:138px;background:#2a2a2a;"></div><div style="position:absolute;left:37.5px;top:190.5px;width:254px;height:47.5px;box-sizing:border-box;border:1.5px solid #3b7f58;background:transparent;"></div><div style="position:absolute;left:288.5px;top:235.5px;width:5px;height:5px;background:#217346;border:1px solid #fff;box-sizing:border-box"></div><span id="t99" style="position:absolute;left:84.61px;top:194.03px;font-family:'Liberation Serif', serif;font-size:11.5px;font-weight:700;color:#111;line-height:normal;white-space:pre;">Loại hoa</span><span id="t100" style="position:absolute;left:199.16px;top:194.03px;font-family:'Liberation Serif', serif;font-size:11.5px;font-weight:700;color:#111;line-height:normal;white-space:pre;">Số lượng (bó)</span><span id="t101" style="position:absolute;left:315.97px;top:194.03px;font-family:'Liberation Serif', serif;font-size:11.5px;font-weight:700;color:#111;line-height:normal;white-space:pre;">Giá trung bình (nghìn VNĐ/bó)</span><span id="t102" style="position:absolute;left:40.70px;top:208.93px;font-family:'Liberation Serif', serif;font-size:11.5px;font-weight:400;color:#111;line-height:normal;white-space:pre;-webkit-text-stroke:0.25px #111;">Hoa hồng</span><span id="t103" style="position:absolute;left:270.70px;top:208.93px;font-family:'Liberation Serif', serif;font-size:11.5px;font-weight:400;color:#111;line-height:normal;white-space:pre;-webkit-text-stroke:0.25px #111;">120</span><span id="t104" style="position:absolute;left:483.45px;top:208.93px;font-family:'Liberation Serif', serif;font-size:11.5px;font-weight:400;color:#111;line-height:normal;white-space:pre;-webkit-text-stroke:0.25px #111;">45</span><span id="t105" style="position:absolute;left:40.70px;top:224.13px;font-family:'Liberation Serif', serif;font-size:11.5px;font-weight:400;color:#111;line-height:normal;white-space:pre;-webkit-text-stroke:0.25px #111;">Hoa cúc</span><span id="t106" style="position:absolute;left:276.45px;top:224.13px;font-family:'Liberation Serif', serif;font-size:11.5px;font-weight:400;color:#111;line-height:normal;white-space:pre;-webkit-text-stroke:0.25px #111;">95</span><span id="t107" style="position:absolute;left:483.45px;top:224.13px;font-family:'Liberation Serif', serif;font-size:11.5px;font-weight:400;color:#111;line-height:normal;white-space:pre;-webkit-text-stroke:0.25px #111;">35</span><span id="t108" style="position:absolute;left:40.70px;top:239.33px;font-family:'Liberation Serif', serif;font-size:11.5px;font-weight:400;color:#111;line-height:normal;white-space:pre;-webkit-text-stroke:0.25px #111;">Hoa ly</span><span id="t109" style="position:absolute;left:276.45px;top:239.33px;font-family:'Liberation Serif', serif;font-size:11.5px;font-weight:400;color:#111;line-height:normal;white-space:pre;-webkit-text-stroke:0.25px #111;">80</span><span id="t110" style="position:absolute;left:483.45px;top:239.33px;font-family:'Liberation Serif', serif;font-size:11.5px;font-weight:400;color:#111;line-height:normal;white-space:pre;-webkit-text-stroke:0.25px #111;">60</span><span id="t111" style="position:absolute;left:40.70px;top:254.53px;font-family:'Liberation Serif', serif;font-size:11.5px;font-weight:400;color:#111;line-height:normal;white-space:pre;-webkit-text-stroke:0.25px #111;">Hoa lan</span><span id="t112" style="position:absolute;left:276.45px;top:254.53px;font-family:'Liberation Serif', serif;font-size:11.5px;font-weight:400;color:#111;line-height:normal;white-space:pre;-webkit-text-stroke:0.25px #111;">60</span><span id="t113" style="position:absolute;left:483.45px;top:254.53px;font-family:'Liberation Serif', serif;font-size:11.5px;font-weight:400;color:#111;line-height:normal;white-space:pre;-webkit-text-stroke:0.25px #111;">90</span><span id="t114" style="position:absolute;left:40.70px;top:269.74px;font-family:'Liberation Serif', serif;font-size:11.5px;font-weight:400;color:#111;line-height:normal;white-space:pre;-webkit-text-stroke:0.25px #111;">Hoa hướng dương</span><span id="t115" style="position:absolute;left:276.45px;top:269.74px;font-family:'Liberation Serif', serif;font-size:11.5px;font-weight:400;color:#111;line-height:normal;white-space:pre;-webkit-text-stroke:0.25px #111;">70</span><span id="t116" style="position:absolute;left:483.45px;top:269.74px;font-family:'Liberation Serif', serif;font-size:11.5px;font-weight:400;color:#111;line-height:normal;white-space:pre;-webkit-text-stroke:0.25px #111;">50</span><span id="t117" style="position:absolute;left:40.70px;top:284.94px;font-family:'Liberation Serif', serif;font-size:11.5px;font-weight:400;color:#111;line-height:normal;white-space:pre;-webkit-text-stroke:0.25px #111;">Hoa tulip</span><span id="t118" style="position:absolute;left:276.45px;top:284.94px;font-family:'Liberation Serif', serif;font-size:11.5px;font-weight:400;color:#111;line-height:normal;white-space:pre;-webkit-text-stroke:0.25px #111;">50</span><span id="t119" style="position:absolute;left:483.45px;top:284.94px;font-family:'Liberation Serif', serif;font-size:11.5px;font-weight:400;color:#111;line-height:normal;white-space:pre;-webkit-text-stroke:0.25px #111;">75</span><span id="t120" style="position:absolute;left:40.70px;top:300.13px;font-family:'Liberation Serif', serif;font-size:11.5px;font-weight:400;color:#111;line-height:normal;white-space:pre;-webkit-text-stroke:0.25px #111;">Hoa sen</span><span id="t121" style="position:absolute;left:276.45px;top:300.13px;font-family:'Liberation Serif', serif;font-size:11.5px;font-weight:400;color:#111;line-height:normal;white-space:pre;-webkit-text-stroke:0.25px #111;">40</span><span id="t122" style="position:absolute;left:483.45px;top:300.13px;font-family:'Liberation Serif', serif;font-size:11.5px;font-weight:400;color:#111;line-height:normal;white-space:pre;-webkit-text-stroke:0.25px #111;">55</span><span id="t123" style="position:absolute;left:40.70px;top:315.34px;font-family:'Liberation Serif', serif;font-size:11.5px;font-weight:400;color:#111;line-height:normal;white-space:pre;-webkit-text-stroke:0.25px #111;">Hoa đồng tiền</span><span id="t124" style="position:absolute;left:276.45px;top:315.34px;font-family:'Liberation Serif', serif;font-size:11.5px;font-weight:400;color:#111;line-height:normal;white-space:pre;-webkit-text-stroke:0.25px #111;">65</span><span id="t125" style="position:absolute;left:483.45px;top:315.34px;font-family:'Liberation Serif', serif;font-size:11.5px;font-weight:400;color:#111;line-height:normal;white-space:pre;-webkit-text-stroke:0.25px #111;">40</span><div style="position:absolute;left:17px;top:625px;width:1183px;height:18px;background:#e6e6e6;"></div><div style="position:absolute;left:17px;top:625px;width:1183px;height:1px;background:#c6c6c6;"></div><svg style="position:absolute;left:33px;top:630px;" width="8" height="10" viewBox="0 0 8 10"><path d="M6 1L2 5l4 4z" fill="#c4c4c4"/></svg><svg style="position:absolute;left:51px;top:630px;" width="8" height="10" viewBox="0 0 8 10"><path d="M2 1l4 4-4 4z" fill="#c4c4c4"/></svg><div style="position:absolute;left:82.3px;top:625px;width:50.2px;height:16.5px;background:#ffffff;"></div><div style="position:absolute;left:82px;top:625px;width:1px;height:17px;background:#c4c4c4;"></div><div style="position:absolute;left:132px;top:625px;width:1px;height:17px;background:#c4c4c4;"></div><div style="position:absolute;left:82.3px;top:640.3px;width:50.2px;height:1.8px;background:#2f6d4c;"></div><span id="t126" style="position:absolute;left:90.30px;top:626.64px;font-family:'Liberation Sans', sans-serif;font-size:10.5px;font-weight:700;color:#2d6a49;line-height:normal;white-space:pre;transform:scaleX(0.9655);transform-origin:0 0;">Sheet1</span><svg style="position:absolute;left:152px;top:628px;" width="14" height="14" viewBox="0 0 14 14"><circle cx="7" cy="7" r="6" fill="none" stroke="#c4c4c4" stroke-width="1"/><path d="M7 3.5v7M3.5 7h7" stroke="#c4c4c4" stroke-width="1"/></svg><div style="position:absolute;left:744px;top:631px;width:1.2px;height:1.2px;background:#8a8a8a;"></div><div style="position:absolute;left:744px;top:634.5px;width:1.2px;height:1.2px;background:#8a8a8a;"></div><div style="position:absolute;left:744px;top:638px;width:1.2px;height:1.2px;background:#8a8a8a;"></div><div style="position:absolute;left:755.2px;top:629.3px;width:423px;height:11.5px;box-sizing:border-box;border:1px solid #d4d4d4;background:#ffffff;"></div><div style="position:absolute;left:756px;top:630.3px;width:12px;height:9.5px;background:#ffffff;border-right:1px solid #d4d4d4"></div><svg style="position:absolute;left:757px;top:631px;" width="8" height="8" viewBox="0 0 8 8"><path d="M6 1L2.5 4 6 7z" fill="#444"/></svg><div style="position:absolute;left:17px;top:643.2px;width:1183px;height:18.3px;background:#f3f2f1;"></div><div style="position:absolute;left:17px;top:661.5px;width:1183px;height:1px;background:#dcdad8;"></div><div style="position:absolute;left:17px;top:662.5px;width:1183px;height:5px;background:#efedeb;"></div><span id="t127" style="position:absolute;left:23.20px;top:646.76px;font-family:'Liberation Sans', sans-serif;font-size:9.5px;font-weight:400;color:#444;line-height:normal;white-space:pre;transform:scaleX(0.7975);transform-origin:0 0;">Ready</span><span id="t128" style="position:absolute;left:837.60px;top:647.06px;font-family:'Liberation Sans', sans-serif;font-size:9.5px;font-weight:400;color:#444;line-height:normal;white-space:pre;transform:scaleX(0.8440);transform-origin:0 0;">Average: 107.5</span><span id="t129" style="position:absolute;left:904.40px;top:647.06px;font-family:'Liberation Sans', sans-serif;font-size:9.5px;font-weight:400;color:#444;line-height:normal;white-space:pre;transform:scaleX(0.8532);transform-origin:0 0;">Count: 6</span><span id="t130" style="position:absolute;left:947.00px;top:647.06px;font-family:'Liberation Sans', sans-serif;font-size:9.5px;font-weight:400;color:#444;line-height:normal;white-space:pre;transform:scaleX(0.8420);transform-origin:0 0;">Sum: 215</span><div style="position:absolute;left:996px;top:644.5px;width:31px;height:16.5px;background:#d2d0ce;"></div><svg style="position:absolute;left:1005px;top:646px;" width="13" height="13" viewBox="0 0 13 13"><path d="M1.5 1.5h10v10h-10zM4.8 1.5v10M8.2 1.5v10M1.5 4.8h10M1.5 8.2h10" fill="none" stroke="#555" stroke-width="1.1"/></svg><svg style="position:absolute;left:1037px;top:646px;" width="13" height="13" viewBox="0 0 13 13"><path d="M1.5 1.5h10v10h-10z" fill="none" stroke="#555" stroke-width="1.1"/><path d="M4 4h5v5H4z" fill="#ddd" stroke="#666" stroke-width="1"/></svg><svg style="position:absolute;left:1068px;top:646px;" width="13" height="13" viewBox="0 0 13 13"><path d="M1.5 1.5h10v10h-10zM1.5 8.5h10M5 1.5v7M8 1.5v7" fill="none" stroke="#555" stroke-width="1.1"/></svg><div style="position:absolute;left:1095.4px;top:651.5px;width:6px;height:1.1px;background:#555;"></div><div style="position:absolute;left:1105.5px;top:652px;width:79px;height:1px;background:#c8c8c8;"></div><div style="position:absolute;left:1143px;top:648px;width:4px;height:8.7px;background:#666;"></div><div style="position:absolute;left:1188.6px;top:651.5px;width:6px;height:1.1px;background:#555;"></div><div style="position:absolute;left:1191.1px;top:649px;width:1.1px;height:6px;background:#555;"></div><div style="position:absolute;left:527.6px;top:127.5px;width:261.4px;height:137px;background:#ffffff;box-shadow:0 2px 6px rgba(0,0,0,0.2),0 0 1px rgba(0,0,0,0.3);"></div><svg style="position:absolute;left:539px;top:138.0px;" width="25" height="23" viewBox="0 0 25 23"><rect x="1.5" y="4.8" width="7.699999999999999" height="5.500000000000001" fill="#58a6ea"/><rect x="9.2" y="4.8" width="7.699999999999999" height="5.500000000000001" fill="#58a6ea"/><rect x="16.9" y="4.8" width="6.800000000000001" height="5.500000000000001" fill="#58a6ea"/><rect x="1.5" y="10.3" width="7.699999999999999" height="5.299999999999999" fill="#58a6ea"/><rect x="9.2" y="10.3" width="7.699999999999999" height="5.299999999999999" fill="#fff"/><rect x="16.9" y="10.3" width="6.800000000000001" height="5.299999999999999" fill="#fff"/><rect x="1.5" y="15.6" width="7.699999999999999" height="5.700000000000001" fill="#58a6ea"/><rect x="9.2" y="15.6" width="7.699999999999999" height="5.700000000000001" fill="#fff"/><rect x="16.9" y="15.6" width="6.800000000000001" height="5.700000000000001" fill="#fff"/><path d="M1.5 4.8h22.2v16.5H1.5zM1.5 10.3h22.2M1.5 15.6h22.2M9.2 4.8v16.5M16.9 4.8v16.5" fill="none" stroke="#7d7d7d" stroke-width="1.05"/><path d="M1.5 21.3V4.8h22.2v5.5H9.2v11H1.5zM1.5 15.6h7.7M9.2 4.8v5.5M16.9 4.8v5.5M1.5 10.3h7.7" fill="none" stroke="#2d6fb3" stroke-width="1.1"/><circle cx="4.8" cy="5.2" r="5" fill="#fff" opacity="0.9"/><path d="M4.8 .6v9.2M.2 5.2h9.2M1.5 1.9l6.6 6.6M8.1 1.9l-6.6 6.6" stroke="#2b80c6" stroke-width="1.6"/><circle cx="4.8" cy="5.2" r="1.5" fill="#2b80c6"/></svg><svg style="position:absolute;left:539px;top:183.6px;" width="25" height="23" viewBox="0 0 25 23"><rect x="1.5" y="4.8" width="7.699999999999999" height="5.500000000000001" fill="#58a6ea"/><rect x="9.2" y="4.8" width="7.699999999999999" height="5.500000000000001" fill="#58a6ea"/><rect x="16.9" y="4.8" width="6.800000000000001" height="5.500000000000001" fill="#58a6ea"/><rect x="1.5" y="10.3" width="7.699999999999999" height="5.299999999999999" fill="#fff"/><rect x="9.2" y="10.3" width="7.699999999999999" height="5.299999999999999" fill="#fff"/><rect x="16.9" y="10.3" width="6.800000000000001" height="5.299999999999999" fill="#fff"/><rect x="1.5" y="15.6" width="7.699999999999999" height="5.700000000000001" fill="#fff"/><rect x="9.2" y="15.6" width="7.699999999999999" height="5.700000000000001" fill="#fff"/><rect x="16.9" y="15.6" width="6.800000000000001" height="5.700000000000001" fill="#fff"/><path d="M1.5 4.8h22.2v16.5H1.5zM1.5 10.3h22.2M1.5 15.6h22.2M9.2 4.8v16.5M16.9 4.8v16.5" fill="none" stroke="#7d7d7d" stroke-width="1.05"/><path d="M1.5 10.3V4.8h22.2v5.5zM9.2 4.8v5.5M16.9 4.8v5.5" fill="none" stroke="#2d6fb3" stroke-width="1.1"/><circle cx="4.8" cy="5.2" r="5" fill="#fff" opacity="0.9"/><path d="M4.8 .6v9.2M.2 5.2h9.2M1.5 1.9l6.6 6.6M8.1 1.9l-6.6 6.6" stroke="#2b80c6" stroke-width="1.6"/><circle cx="4.8" cy="5.2" r="1.5" fill="#2b80c6"/></svg><svg style="position:absolute;left:539px;top:229.2px;" width="25" height="23" viewBox="0 0 25 23"><rect x="1.5" y="4.8" width="7.699999999999999" height="5.500000000000001" fill="#58a6ea"/><rect x="9.2" y="4.8" width="7.699999999999999" height="5.500000000000001" fill="#fff"/><rect x="16.9" y="4.8" width="6.800000000000001" height="5.500000000000001" fill="#fff"/><rect x="1.5" y="10.3" width="7.699999999999999" height="5.299999999999999" fill="#58a6ea"/><rect x="9.2" y="10.3" width="7.699999999999999" height="5.299999999999999" fill="#fff"/><rect x="16.9" y="10.3" width="6.800000000000001" height="5.299999999999999" fill="#fff"/><rect x="1.5" y="15.6" width="7.699999999999999" height="5.700000000000001" fill="#58a6ea"/><rect x="9.2" y="15.6" width="7.699999999999999" height="5.700000000000001" fill="#fff"/><rect x="16.9" y="15.6" width="6.800000000000001" height="5.700000000000001" fill="#fff"/><path d="M1.5 4.8h22.2v16.5H1.5zM1.5 10.3h22.2M1.5 15.6h22.2M9.2 4.8v16.5M16.9 4.8v16.5" fill="none" stroke="#7d7d7d" stroke-width="1.05"/><path d="M1.5 4.8h7.7v16.5H1.5zM1.5 10.3h7.7M1.5 15.6h7.7" fill="none" stroke="#2d6fb3" stroke-width="1.1"/><circle cx="4.8" cy="5.2" r="5" fill="#fff" opacity="0.9"/><path d="M4.8 .6v9.2M.2 5.2h9.2M1.5 1.9l6.6 6.6M8.1 1.9l-6.6 6.6" stroke="#2b80c6" stroke-width="1.6"/><circle cx="4.8" cy="5.2" r="1.5" fill="#2b80c6"/></svg><span id="t131" style="position:absolute;left:575.50px;top:132.96px;font-family:'Liberation Sans', sans-serif;font-size:9.5px;font-weight:700;color:#3c3c3c;line-height:normal;white-space:pre;transform:scaleX(0.9298);transform-origin:0 0;">Freeze Panes</span><span id="t132" style="position:absolute;left:575.50px;top:147.42px;font-family:'Liberation Sans', sans-serif;font-size:9px;font-weight:400;color:#6a6a6a;line-height:normal;white-space:pre;transform:scaleX(1.0401);transform-origin:0 0;">Keep rows and columns visible while the rest of</span><span id="t133" style="position:absolute;left:575.50px;top:160.02px;font-family:'Liberation Sans', sans-serif;font-size:9px;font-weight:400;color:#6a6a6a;line-height:normal;white-space:pre;transform:scaleX(1.0345);transform-origin:0 0;">the worksheet scrolls (based on current selection).</span><span id="t134" style="position:absolute;left:575.50px;top:178.66px;font-family:'Liberation Sans', sans-serif;font-size:9.5px;font-weight:700;color:#3c3c3c;line-height:normal;white-space:pre;transform:scaleX(0.9581);transform-origin:0 0;">Freeze Top Row</span><span id="t135" style="position:absolute;left:575.50px;top:192.92px;font-family:'Liberation Sans', sans-serif;font-size:9px;font-weight:400;color:#6a6a6a;line-height:normal;white-space:pre;transform:scaleX(1.0663);transform-origin:0 0;">Keep the top row visible while scrolling through</span><span id="t136" style="position:absolute;left:575.50px;top:205.02px;font-family:'Liberation Sans', sans-serif;font-size:9px;font-weight:400;color:#6a6a6a;line-height:normal;white-space:pre;transform:scaleX(1.0393);transform-origin:0 0;">the rest of the worksheet.</span><span id="t137" style="position:absolute;left:575.50px;top:224.06px;font-family:'Liberation Sans', sans-serif;font-size:9.5px;font-weight:700;color:#3c3c3c;line-height:normal;white-space:pre;transform:scaleX(0.9506);transform-origin:0 0;">Freeze First Column</span><span id="t138" style="position:absolute;left:575.50px;top:238.12px;font-family:'Liberation Sans', sans-serif;font-size:9px;font-weight:400;color:#6a6a6a;line-height:normal;white-space:pre;transform:scaleX(1.0588);transform-origin:0 0;">Keep the first column visible while scrolling</span><span id="t139" style="position:absolute;left:575.50px;top:250.32px;font-family:'Liberation Sans', sans-serif;font-size:9px;font-weight:400;color:#6a6a6a;line-height:normal;white-space:pre;transform:scaleX(1.0503);transform-origin:0 0;">through the rest of the worksheet.</span><div style="position:absolute;left:575.8px;top:142.3px;width:4.5px;height:0.9px;background:#3c3c3c;"></div><div style="position:absolute;left:626px;top:188.3px;width:5px;height:0.9px;background:#3c3c3c;"></div><div style="position:absolute;left:629.5px;top:233.6px;width:5.2px;height:0.9px;background:#3c3c3c;"></div><div style="position:absolute;left:515px;top:67.9px;width:56.3px;height:68.9px;box-sizing:border-box;border:3.9px solid #ec1f2c;background:transparent;"></div><div style="position:absolute;left:700px;top:666px;width:8px;height:3px;border-radius:50%;background:#c8283c"></div>
</body></html>
